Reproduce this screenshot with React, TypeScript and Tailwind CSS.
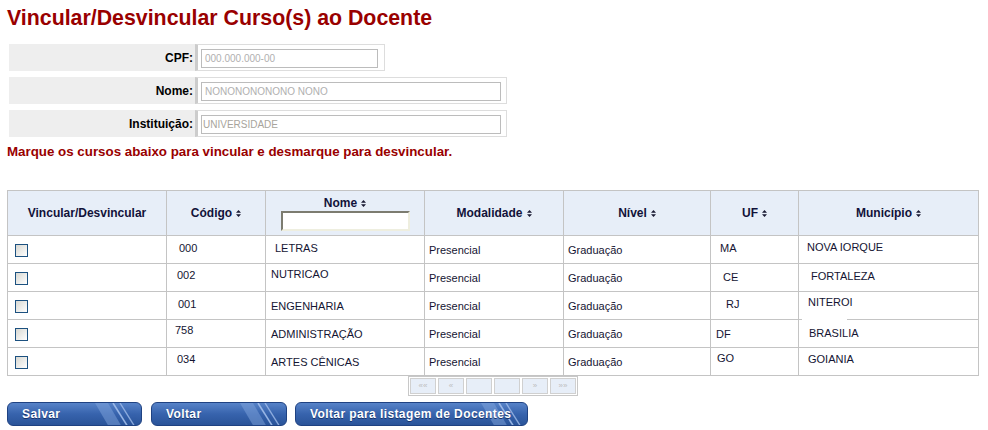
import React from 'react';

type Row = {
  code: string;
  codeCls: string;
  nome: string;
  nomeCls: string;
  uf: string;
  ufCls: string;
  mun: string;
  munCls: string;
  cbCls: string;
};

const rows: Row[] = [
  { code: '000', codeCls: 'pl-[12px] pt-[6px]', nome: 'LETRAS', nomeCls: 'pl-[9px] pt-[6px]', uf: 'MA', ufCls: 'pl-[9px] pt-[6px]', mun: 'NOVA IORQUE', munCls: 'pl-[8px] pt-[5px]', cbCls: 'pt-[8px]' },
  { code: '002', codeCls: 'pl-[10px] pt-[5px]', nome: 'NUTRICAO', nomeCls: 'pl-[5px] pt-[4px]', uf: 'CE', ufCls: 'pl-[12px] pt-[7px]', mun: 'FORTALEZA', munCls: 'pl-[12px] pt-[6px]', cbCls: 'pt-[8px]' },
  { code: '001', codeCls: 'pl-[11px] pt-[6px]', nome: 'ENGENHARIA', nomeCls: 'pl-[5px] pt-[8px]', uf: 'RJ', ufCls: 'pl-[15px] pt-[6px]', mun: 'NITEROI', munCls: 'pl-[9px] pt-[4px]', cbCls: 'pt-[8px]' },
  { code: '758', codeCls: 'pl-[8px] pt-[4px]', nome: 'ADMINISTRAÇÃO', nomeCls: 'pl-[5px] pt-[8px]', uf: 'DF', ufCls: 'pl-[5px] pt-[8px]', mun: 'BRASILIA', munCls: 'pl-[10px] pt-[7px]', cbCls: 'pt-[8px]' },
  { code: '034', codeCls: 'pl-[10px] pt-[5px]', nome: 'ARTES CÊNICAS', nomeCls: 'pl-[5px] pt-[8px]', uf: 'GO', ufCls: 'pl-[6px] pt-[4px]', mun: 'GOIANIA', munCls: 'pl-[9px] pt-[5px]', cbCls: 'pt-[8px]' },
];

function SortIcon() {
  return (
    <svg width="5" height="7" viewBox="0 0 5 7" className="ml-[4px] inline-block">
      <path d="M2.5 0 L5 2.8 L0 2.8 Z M0 4.2 L5 4.2 L2.5 7 Z" fill="#1a1a33" />
    </svg>
  );
}

function HeaderCell({ label, sort = true }: { label: string; sort?: boolean }) {
  return (
    <div className="flex h-[45px] items-center justify-center border-b border-l border-[#c4c4c4] bg-[#e7eef8] text-[12px] font-bold text-[#12123a]">
      <span>{label}</span>
      {sort && <SortIcon />}
    </div>
  );
}

function Checkbox() {
  return <span className="block h-[13px] w-[13px] border border-[#1c5180] bg-gradient-to-br from-[#d8d8d2] to-white" />;
}

function FormRow({ label, value, width, inputWidth, color }: { label: string; value: string; width: string; inputWidth: string; color: string }) {
  return (
    <div className="flex h-[27px]">
      <div className="flex w-[186px] items-center justify-end bg-[#eeeeee] pr-[2px] text-[12px] font-bold text-black">{label}</div>
      <div className={`h-[27px] ${width} border border-l-[3px] border-[#dddddd] border-l-[#cccccc] pl-[3px] pt-[4px]`}>
        <div className={`flex h-[19px] ${inputWidth} items-center border border-[#bcbcbc] bg-white text-[10px] ${color}`}>{value}</div>
      </div>
    </div>
  );
}

function BlueButton({ label, width }: { label: string; width: string }) {
  return (
    <button
      className={`relative flex h-[24px] ${width} items-center overflow-hidden rounded-[6px] border border-[#1f4282] bg-gradient-to-b from-[#5783c8] via-[#3763ad] to-[#2a5499] pl-[14px] text-[12px] font-bold tracking-[0.4px] text-white [text-shadow:0_1px_0_#17336a]`}>
      <span className="relative z-10">{label}</span>
      <svg width="46" height="24" viewBox="0 0 46 24" className="absolute right-0 top-0">
        <polygon points="0,0 13,0 27,24 14,24" fill="#7fa4dc" opacity="0.5" />
        <line x1="18" y1="0" x2="33" y2="24" stroke="#a8c3ee" strokeWidth="1.6" opacity="0.85" />
        <line x1="25" y1="0" x2="40" y2="24" stroke="#a8c3ee" strokeWidth="1.4" opacity="0.75" />
      </svg>
    </button>
  );
}

export default function App() {
  return (
    <div className="h-[430px] w-[988px] overflow-hidden bg-white font-['Liberation_Sans',Arial,sans-serif]">
      <h1 className="pl-[7px] pt-[6px] text-[21.33px] font-bold leading-[24px] text-[#990000]">
        Vincular/Desvincular Curso(s) ao Docente
      </h1>

      <div className="ml-[9px] mt-[14px] flex flex-col gap-[6px]">
        <FormRow label="CPF:" value="000.000.000-00" width="w-[190px]" inputWidth="w-[177px] pl-[3px]" color="text-[#b0b0b0]" />
        <FormRow label="Nome:" value="NONONONONONO NONO" width="w-[312px]" inputWidth="w-[300px] pl-[3px]" color="text-[#b0b0b0]" />
        <FormRow label="Instituição:" value="UNIVERSIDADE" width="w-[312px]" inputWidth="w-[300px] pl-[1px]" color="text-[#a8a49c]" />
      </div>

      <p className="ml-[7px] mt-[7px] text-[13.33px] font-bold leading-[16px] text-[#990000]">
        Marque os cursos abaixo para vincular e desmarque para desvincular.
      </p>

      <div className="ml-[7px] mt-[30px] w-[972px]">
        <div className="grid grid-cols-[159px_99px_159px_139px_147px_88px_180px] border-r border-t border-[#c4c4c4] text-[11px] leading-[13px] text-[#141432]">
          <HeaderCell label="Vincular/Desvincular" sort={false} />
          <HeaderCell label="Código" />
          <div className="flex h-[45px] flex-col items-center border-b border-l border-[#c4c4c4] bg-[#e7eef8] pt-[5px]">
            <div className="flex items-center text-[12px] font-bold leading-[14px] text-[#12123a]">
              <span>Nome</span>
              <SortIcon />
            </div>
            <div className="mt-[1px] h-[20px] w-[129px] border-2 border-b-[#eeeedf] border-l-[#7c7c70] border-r-[#eeeedf] border-t-[#7c7c70] bg-white" />
          </div>
          <HeaderCell label="Modalidade" />
          <HeaderCell label="Nível" />
          <HeaderCell label="UF" />
          <HeaderCell label="Município" />

          {rows.map((r, i) => (
            <React.Fragment key={r.code}>
              <div className={`h-[28px] border-b border-l border-[#c4c4c4] pl-[7px] ${r.cbCls}`}>
                <Checkbox />
              </div>
              <div className={`h-[28px] border-b border-l border-[#c4c4c4] ${r.codeCls}`}>{r.code}</div>
              <div className={`h-[28px] border-b border-l border-[#c4c4c4] ${r.nomeCls}`}>{r.nome}</div>
              <div className="h-[28px] border-b border-l border-[#c4c4c4] pl-[4px] pt-[8px]">Presencial</div>
              <div className="h-[28px] border-b border-l border-[#c4c4c4] pl-[4px] pt-[8px]">Graduação</div>
              <div className={`h-[28px] border-b border-l border-[#c4c4c4] ${r.ufCls}`}>{r.uf}</div>
              <div className={`relative h-[28px] border-b border-l border-[#c4c4c4] ${r.munCls}`}>
                {i === 3 && <span className="absolute left-[3px] top-[-1px] h-[1px] w-[45px] bg-white" />}
                {r.mun}
              </div>
            </React.Fragment>
          ))}
        </div>

        <div className="flex justify-center">
          <div className="flex gap-[2px] border border-[#c8c8c8] p-[1px] text-[8px] leading-none text-[#bdbdbd]">
            {['««', '«', '', '', '»', '»»'].map((s, i) => (
              <div key={i} className="flex h-[16px] w-[26px] items-center justify-center border border-[#d0d0d0] bg-[#e7eef8]">
                {s}
              </div>
            ))}
          </div>
        </div>
      </div>

      <div className="ml-[7px] mt-[6px] flex">
        <BlueButton label="Salvar" width="w-[135px]" />
        <div className="ml-[9px]">
          <BlueButton label="Voltar" width="w-[136px]" />
        </div>
        <div className="ml-[8px]">
          <BlueButton label="Voltar para listagem de Docentes" width="w-[233px]" />
        </div>
      </div>
    </div>
  );
}
